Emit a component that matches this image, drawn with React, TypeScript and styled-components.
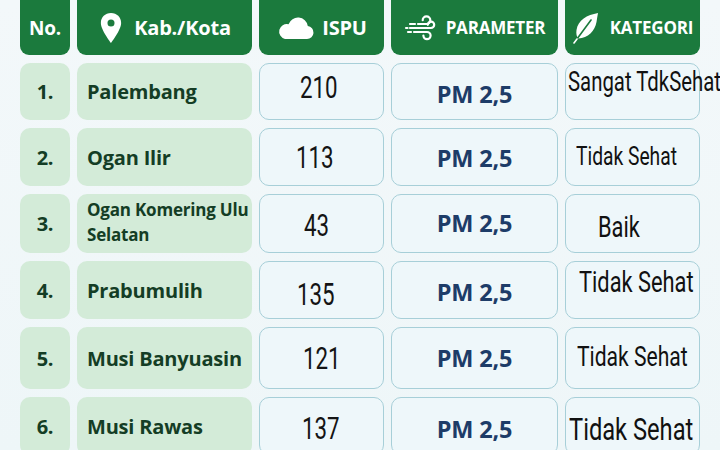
import React from "react";
import styled, { createGlobalStyle } from "styled-components";

const Global = createGlobalStyle`
  html, body { margin: 0; padding: 0; background: #f1f7f9; }
  body { width: 720px; height: 450px; overflow: hidden; font-family: "Open Sans", "Noto Sans", sans-serif; }
`;

const Page = styled.div`
  width: 720px;
  height: 450px;
  padding: 0 20px 0 20px;
  box-sizing: border-box;
  background: linear-gradient(180deg, #f3f8fa 0%, #eef6f8 100%);
  display: grid;
  grid-template-columns: 50px 175px 125px 167px 135px;
  grid-template-rows: 55px 57px 58px 59px 58px 62px 58px;
  column-gap: 7px;
  row-gap: 8px;
  overflow: hidden;
`;

const HeadCell = styled.div<{ $size?: number; $gap?: number }>`
  background: #1b7a3d;
  border-radius: 0 0 9px 9px;
  color: #ffffff;
  font-weight: 700;
  font-size: ${(p) => p.$size ?? 20}px;
  display: flex;
  align-items: center;
  justify-content: center;
  gap: ${(p) => p.$gap ?? 10}px;
  letter-spacing: -0.2px;
  white-space: nowrap;
`;

const GreenCell = styled.div<{ $center?: boolean }>`
  background: #d3ebd8;
  border-radius: 10px;
  display: flex;
  align-items: center;
  justify-content: ${(p) => (p.$center ? "center" : "flex-start")};
  padding: 0 ${(p) => (p.$center ? 0 : 10)}px;
  box-sizing: border-box;
  color: #143d25;
  font-weight: 700;
  font-size: 20px;
  letter-spacing: -0.2px;
  white-space: nowrap;
  overflow: visible;
`;

const NameTwoLine = styled.span`
  white-space: normal;
  font-size: 17px;
  line-height: 25px;
  margin-top: -4px;
  margin-right: -14px;
`;

const BlueCell = styled.div<{ $align?: string; $pl?: number; $pt?: number; $pb?: number }>`
  background: #eef7fa;
  border: 1.5px solid #a7cfd8;
  border-radius: 10px;
  box-sizing: border-box;
  display: flex;
  align-items: ${(p) => p.$align ?? "center"};
  justify-content: ${(p) => (p.$pl !== undefined ? "flex-start" : "center")};
  padding-left: ${(p) => p.$pl ?? 0}px;
  padding-top: ${(p) => p.$pt ?? 0}px;
  padding-bottom: ${(p) => p.$pb ?? 0}px;
  white-space: nowrap;
  overflow: visible;
`;

const Num = styled.span`
  font-family: "Roboto", "Liberation Sans", sans-serif;
  font-size: 31px;
  color: #141414;
  display: inline-block;
  transform: scaleX(0.72);
  transform-origin: left center;
`;

const Param = styled.span`
  font-weight: 700;
  font-size: 23.5px;
  color: #1d3c68;
  letter-spacing: -0.2px;
`;

const Cat = styled.span<{ $size?: number }>`
  font-family: "Roboto", "Liberation Sans", sans-serif;
  font-size: ${(p) => p.$size ?? 26}px;
  color: #111111;
  display: inline-block;
  transform: scaleX(0.74);
  transform-origin: left center;
`;

const PinIcon = () => (
  <svg width="26" height="32" viewBox="0 0 24 30">
    <path
      fill="#fff"
      fillRule="evenodd"
      d="M12 1C6.5 1 2.5 5 2.5 10.3c0 6.6 9.5 18.7 9.5 18.7s9.5-12.1 9.5-18.7C21.5 5 17.5 1 12 1zm0 12.6a3.3 3.3 0 1 1 0-6.6 3.3 3.3 0 0 1 0 6.6z"
    />
  </svg>
);

const CloudIcon = () => (
  <svg width="38" height="24" viewBox="0 0 38 24">
    <path
      fill="#fff"
      d="M9 23h22a6.5 6.5 0 0 0 0.8-12.95A10 10 0 0 0 12.5 8.2 7.5 7.5 0 0 0 9 23z"
    />
  </svg>
);

const WindIcon = () => (
  <svg width="36" height="28" viewBox="0 0 36 28" fill="none" stroke="#fff" strokeWidth="2.2" strokeLinecap="round">
    <path d="M14 10h8.5a3.8 3.8 0 1 0-3.8-3.8" />
    <path d="M6 14h21a3.2 3.2 0 1 0-3.2-3.2" />
    <path d="M10 18h13a3.6 3.6 0 1 1-3.6 3.6" />
    <path d="M2 14h1.5" />
    <path d="M6 10h5" />
    <path d="M4 18h3" />
  </svg>
);

const LeafIcon = () => (
  <svg width="28" height="32" viewBox="0 0 28 32">
    <path
      fill="#fff"
      d="M26 1C15 3 6 8 4.5 18c-0.6 4 0.3 7 1.8 8.5C16 26 23 19 24.5 10 25 6.5 25.5 3.5 26 1z"
    />
    <path d="M2 31L19 8" stroke="#1b7a3d" strokeWidth="1.6" strokeLinecap="round" />
    <path d="M2 31l3-4" stroke="#fff" strokeWidth="1.6" strokeLinecap="round" />
  </svg>
);

type Row = {
  no: string;
  name: string;
  twoLine?: boolean;
  ispu: string;
  ispuPl: number;
  ispuPt?: number;
  ispuPb?: number;
  paramPt?: number;
  paramPb?: number;
  cat: string;
  catSize: number;
  catPl: number;
  catAlign?: string;
  catPt?: number;
  catPb?: number;
};

const rows: Row[] = [
  { no: "1.", name: "Palembang", ispu: "210", ispuPl: 40, ispuPb: 8, paramPt: 4, cat: "Sangat TdkSehat", catSize: 27.5, catPl: 2, catAlign: "flex-start", catPt: 1 },
  { no: "2.", name: "Ogan Ilir", ispu: "113", ispuPl: 36, paramPt: 2, cat: "Tidak Sehat", catSize: 26, catPl: 10, catPb: 2 },
  { no: "3.", name: "Ogan Komering Ulu Selatan", twoLine: true, ispu: "43", ispuPl: 44, ispuPt: 4, paramPb: 2, cat: "Baik", catSize: 29.5, catPl: 32, catPt: 6 },
  { no: "4.", name: "Prabumulih", ispu: "135", ispuPl: 37, ispuPt: 8, paramPt: 4, cat: "Tidak Sehat", catSize: 29.5, catPl: 13, catPb: 16 },
  { no: "5.", name: "Musi Banyuasin", ispu: "121", ispuPl: 43, cat: "Tidak Sehat", catSize: 28.5, catPl: 11, catPb: 4 },
  { no: "6.", name: "Musi Rawas", ispu: "137", ispuPl: 42, ispuPt: 4, paramPt: 6, cat: "Tidak Sehat", catSize: 32, catPl: 3, catPt: 6 },
];

export default function App() {
  return (
    <>
      <Global />
      <Page>
        <HeadCell $size={19}>No.</HeadCell>
        <HeadCell>
          <PinIcon />
          Kab./Kota
        </HeadCell>
        <HeadCell $gap={8}>
          <CloudIcon />
          ISPU
        </HeadCell>
        <HeadCell $size={17} $gap={6}>
          <WindIcon />
          PARAMETER
        </HeadCell>
        <HeadCell $size={17} $gap={10}>
          <LeafIcon />
          KATEGORI
        </HeadCell>
        {rows.map((r) => (
          <React.Fragment key={r.no}>
            <GreenCell $center>{r.no}</GreenCell>
            <GreenCell>{r.twoLine ? <NameTwoLine>{r.name}</NameTwoLine> : r.name}</GreenCell>
            <BlueCell $pl={r.ispuPl} $pt={r.ispuPt} $pb={r.ispuPb}>
              <Num>{r.ispu}</Num>
            </BlueCell>
            <BlueCell $pt={r.paramPt} $pb={r.paramPb}>
              <Param>PM 2,5</Param>
            </BlueCell>
            <BlueCell $align={r.catAlign} $pl={r.catPl} $pt={r.catPt} $pb={r.catPb}>
              <Cat $size={r.catSize}>{r.cat}</Cat>
            </BlueCell>
          </React.Fragment>
        ))}
      </Page>
    </>
  );
}
